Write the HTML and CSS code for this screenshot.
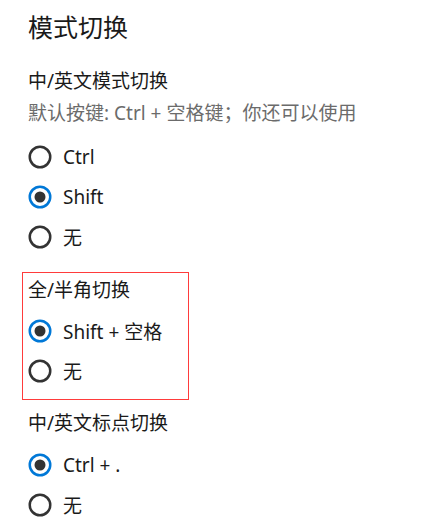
FILE: index.html
```html
<!DOCTYPE html>
<html lang="zh-CN">
<head>
<meta charset="utf-8">
<title>模式切换</title>
<link rel="stylesheet" href="styles.css">
</head>
<body>
<main class="page">
  <h1 class="title">模式切换</h1>

  <section class="group">
    <h2 class="subtitle">中/英文模式切换</h2>
    <p class="desc">默认按键: Ctrl + 空格键；你还可以使用</p>
    <ul class="radios">
      <li class="radio"><svg class="dot" viewBox="0 0 24 24" width="24" height="24"><circle cx="12" cy="12" r="10.25" class="ring"/></svg><span>Ctrl</span></li>
      <li class="radio on"><svg class="dot" viewBox="0 0 24 24" width="24" height="24"><circle cx="12" cy="12" r="10.25" class="ring"/><circle cx="12" cy="12" r="5.5" class="fill"/></svg><span>Shift</span></li>
      <li class="radio"><svg class="dot" viewBox="0 0 24 24" width="24" height="24"><circle cx="12" cy="12" r="10.25" class="ring"/></svg><span>无</span></li>
    </ul>
  </section>

  <section class="group boxed">
    <h2 class="subtitle">全/半角切换</h2>
    <ul class="radios tight">
      <li class="radio on"><svg class="dot" viewBox="0 0 24 24" width="24" height="24"><circle cx="12" cy="12" r="10.25" class="ring"/><circle cx="12" cy="12" r="5.5" class="fill"/></svg><span>Shift + 空格</span></li>
      <li class="radio"><svg class="dot" viewBox="0 0 24 24" width="24" height="24"><circle cx="12" cy="12" r="10.25" class="ring"/></svg><span>无</span></li>
    </ul>
  </section>

  <section class="group last">
    <h2 class="subtitle">中/英文标点切换</h2>
    <ul class="radios tight">
      <li class="radio on"><svg class="dot" viewBox="0 0 24 24" width="24" height="24"><circle cx="12" cy="12" r="10.25" class="ring"/><circle cx="12" cy="12" r="5.5" class="fill"/></svg><span>Ctrl + .</span></li>
      <li class="radio"><svg class="dot" viewBox="0 0 24 24" width="24" height="24"><circle cx="12" cy="12" r="10.25" class="ring"/></svg><span>无</span></li>
    </ul>
  </section>
</main>
</body>
</html>
```
FILE: styles.css
```css
* { box-sizing: border-box; }
html, body { margin: 0; padding: 0; background: #fff; }
body {
  font-family: "Noto Sans", "Noto Sans CJK SC", sans-serif;
  color: #1a1a1a;
  width: 438px;
  height: 523px;
  overflow: hidden;
}
.page {
  padding: 10px 0 0 28px;
  display: flex;
  flex-direction: column;
}
.title {
  margin: 0;
  font-size: 25px;
  font-weight: 400;
  line-height: 34px;
}
.group {
  display: flex;
  flex-direction: column;
  margin-top: 23px;
}
.subtitle {
  margin: 0;
  font-size: 19px;
  font-weight: 400;
  line-height: 28px;
}
.desc {
  margin: 4px 0 0;
  font-size: 19px;
  line-height: 28px;
  color: #6b6b6b;
}
.radios {
  list-style: none;
  margin: 10px 0 0;
  padding: 0;
  display: flex;
  flex-direction: column;
}
.radios.tight { margin-top: 7px; }
.radio {
  height: 40px;
  display: flex;
  align-items: center;
  gap: 11px;
  font-size: 19px;
}
.dot { flex: none; display: block; }
.ring { fill: none; stroke: #333; stroke-width: 2.5; }
.radio.on .ring { stroke: #0078d7; }
.fill { fill: #333; }
.boxed {
  margin-top: 15px;
  margin-left: -6px;
  width: 167px;
  border: 1px solid #ff3b3b;
  padding: 3px 0 8px 5px;
}
.last { margin-top: 9px; }
.last .radios.tight { margin-top: 8px; }
```
